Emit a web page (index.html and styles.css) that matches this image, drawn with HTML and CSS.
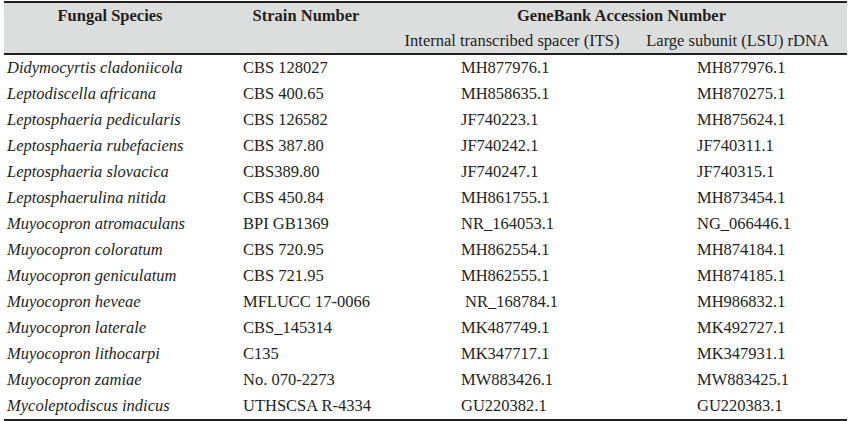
FILE: index.html
```html
<!DOCTYPE html>
<html>
<head>
<meta charset="utf-8">
<link rel="stylesheet" href="styles.css">
</head>
<body>
<table class="tbl">
  <colgroup>
    <col class="c1"><col class="c2"><col class="c3"><col class="c4">
  </colgroup>
  <thead>
    <tr class="h1">
      <th rowspan="2" class="top">Fungal Species</th>
      <th rowspan="2" class="top">Strain Number</th>
      <th colspan="2">GeneBank Accession Number</th>
    </tr>
    <tr class="h2">
      <th class="sub">Internal transcribed spacer (ITS)</th>
      <th class="sub">Large subunit (LSU) rDNA</th>
    </tr>
  </thead>
  <tbody>
    <tr><td class="sp">Didymocyrtis cladoniicola</td><td class="st">CBS 128027</td><td class="its">MH877976.1</td><td class="lsu">MH877976.1</td></tr>
    <tr><td class="sp">Leptodiscella africana</td><td class="st">CBS 400.65</td><td class="its">MH858635.1</td><td class="lsu">MH870275.1</td></tr>
    <tr><td class="sp">Leptosphaeria pedicularis</td><td class="st">CBS 126582</td><td class="its">JF740223.1</td><td class="lsu">MH875624.1</td></tr>
    <tr><td class="sp">Leptosphaeria rubefaciens</td><td class="st">CBS 387.80</td><td class="its">JF740242.1</td><td class="lsu">JF740311.1</td></tr>
    <tr><td class="sp">Leptosphaeria slovacica</td><td class="st">CBS389.80</td><td class="its">JF740247.1</td><td class="lsu">JF740315.1</td></tr>
    <tr><td class="sp">Leptosphaerulina nitida</td><td class="st">CBS 450.84</td><td class="its">MH861755.1</td><td class="lsu">MH873454.1</td></tr>
    <tr><td class="sp">Muyocopron atromaculans</td><td class="st">BPI GB1369</td><td class="its">NR_164053.1</td><td class="lsu">NG_066446.1</td></tr>
    <tr><td class="sp">Muyocopron coloratum</td><td class="st">CBS 720.95</td><td class="its">MH862554.1</td><td class="lsu">MH874184.1</td></tr>
    <tr><td class="sp">Muyocopron geniculatum</td><td class="st">CBS 721.95</td><td class="its">MH862555.1</td><td class="lsu">MH874185.1</td></tr>
    <tr><td class="sp">Muyocopron heveae</td><td class="st">MFLUCC 17-0066</td><td class="its shift">NR_168784.1</td><td class="lsu">MH986832.1</td></tr>
    <tr><td class="sp">Muyocopron laterale</td><td class="st">CBS_145314</td><td class="its">MK487749.1</td><td class="lsu">MK492727.1</td></tr>
    <tr><td class="sp">Muyocopron lithocarpi</td><td class="st">C135</td><td class="its">MK347717.1</td><td class="lsu">MK347931.1</td></tr>
    <tr><td class="sp">Muyocopron zamiae</td><td class="st">No. 070-2273</td><td class="its">MW883426.1</td><td class="lsu">MW883425.1</td></tr>
    <tr><td class="sp">Mycoleptodiscus indicus</td><td class="st">UTHSCSA R-4334</td><td class="its">GU220382.1</td><td class="lsu">GU220383.1</td></tr>
  </tbody>
</table>
</body>
</html>
```
FILE: styles.css
```css
html, body {
  margin: 0;
  padding: 0;
  background: #ffffff;
}
body {
  padding: 1px 0 0 4px;
}
.tbl {
  width: 843px;
  border-collapse: collapse;
  table-layout: fixed;
  font-family: "Liberation Serif", "Times New Roman", serif;
  font-size: 16.5px;
  color: #231f20;
  border-top: 2px solid #231f20;
  border-bottom: 2px solid #231f20;
}
.c1 { width: 212px; }
.c2 { width: 180px; }
.c3 { width: 232px; }
.c4 { width: 219px; }
thead {
  background: #dcdddd;
  border-bottom: 2px solid #231f20;
}
th {
  padding: 0;
  text-align: center;
  font-weight: bold;
  height: 25px;
  line-height: 25px;
  white-space: nowrap;
}
th.top {
  vertical-align: top;
}
th.sub {
  font-weight: normal;
}
td {
  height: 26px;
  line-height: 26px;
  padding: 0;
  white-space: nowrap;
}
.sp { padding-left: 3px; font-style: italic; }
.st { padding-left: 27px; }
.its { padding-left: 65px; }
.its.shift { padding-left: 69px; }
.lsu { padding-left: 69px; }
```
